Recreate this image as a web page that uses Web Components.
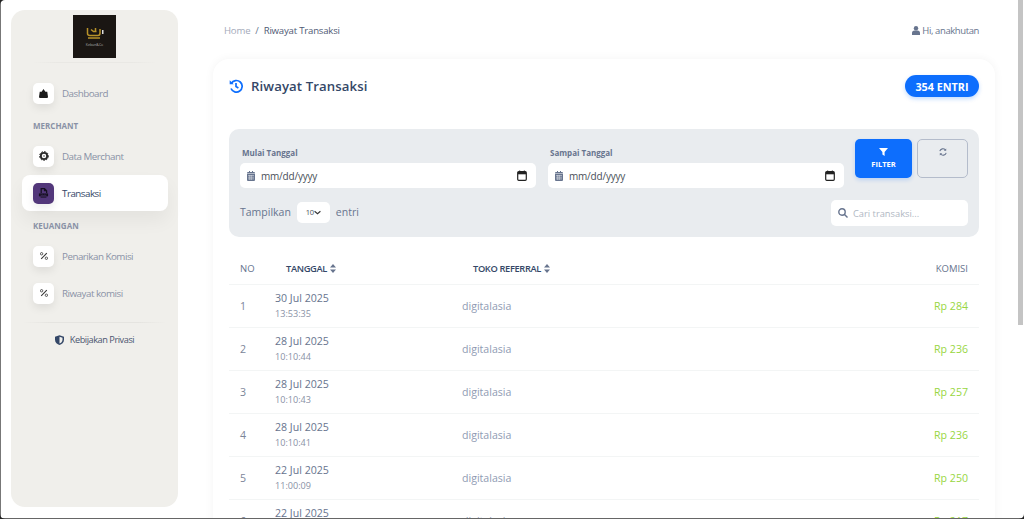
<!DOCTYPE html>
<html><head><meta charset="utf-8">
<style>
html,body{margin:0;padding:0;height:519px;overflow:hidden;background:#fff;font-family:"Open Sans",sans-serif}
</style></head><body>
<template id="t-nav"><style>
:host{display:flex;align-items:center;height:36px;margin:0 10px 0 11px;border-radius:8px;padding-left:11px;gap:8px;font-size:9.8px;letter-spacing:-.5px;color:#8a92a6}
:host([active]){background:#fff;color:#344767;font-weight:500;box-shadow:0 10px 18px rgba(0,0,0,.05);margin-top:1px}
.i{width:21px;height:21px;border-radius:5px;background:#fff;display:flex;align-items:center;justify-content:center;box-shadow:0 4px 8px rgba(0,0,0,.08);color:#222}
:host([active]) .i{background:#52377a;color:#15101f}
svg{display:block}
</style><span class="i"><slot name="icon"></slot></span><slot></slot></template>

<template id="t-side"><style>
:host{display:block;flex:none;width:167px;height:497px;margin:10px 0 0 11px;background:#f0efeb;border-radius:14px;box-sizing:border-box;padding-top:5px}
.logo{width:43px;height:43px;margin:0 auto;background:#1a1613;display:flex;flex-direction:column;align-items:center;justify-content:center}
.hr{height:1px;margin:4px 21px 0;background:linear-gradient(90deg,transparent,#e9e8e4 20%,#e9e8e4 80%,transparent)}
.sec{font-size:8px;font-weight:700;color:#8a92a6;padding-left:22px;line-height:12px}
.hr2{height:1px;margin:11px 11px 0;background:linear-gradient(90deg,transparent,#e5e4e0 20%,#e5e4e0 80%,transparent)}
.pv{display:flex;justify-content:center;align-items:center;gap:6px;font-size:9.2px;letter-spacing:-.45px;color:#4b5570;margin-top:10px}
nav{display:block;padding-top:12px}
</style>
<div class="logo"><svg width="18" height="13" viewBox="0 0 18 13"><path d="M1.500 1v5.500c0 1.500 1 2 2.500 2h8c1.500 0 2-1 2-2.500V2M5 2.500l2.500 2h3M9.500 1v3M2 11h12" fill="none" stroke="#b8922a" stroke-width="1.500"/><path d="M16 3h1.500v4H16z" fill="#ddd"/></svg><span style="font-size:3.500px;color:#aaa;line-height:5px;margin-top:2px">Kebun&amp;Co</span></div>
<div class="hr"></div>
<nav>
<x-nav><svg slot="icon" width="9" height="9" viewBox="0 0 12 12" fill="#1b1b1b"><path d="M6 0l2.500 3.500H11l1 7a1.500 1.500 0 0 1-1.500 1.500h-9A1.500 1.500 0 0 1 0 10.500l1-7h2.500z"/></svg>Dashboard</x-nav>
<div class="sec" style="margin:9px 0 6px">MERCHANT</div>
<x-nav><svg slot="icon" width="10" height="10" viewBox="0 0 12 12"><circle cx="6" cy="6" r="3.800" fill="none" stroke="#2a2a2a" stroke-width="2.200"/><circle cx="6" cy="6" r="5.300" fill="none" stroke="#2a2a2a" stroke-width="1.200" stroke-dasharray="2 1.500"/><circle cx="6" cy="6" r="1.200" fill="#999"/></svg>Data Merchant</x-nav>
<x-nav active><svg slot="icon" width="11" height="10" viewBox="0 0 13 12" fill="#15101f"><path d="M3 0h5l3 3v3H9.500V4H7V1.500H4.500V6H3z"/><path d="M1 6.500h11v3.500H1z"/><path d="M3 7.500h1M5 7.500h1M7 7.500h1M9 7.500h1M3 9h7" stroke="#52377a" stroke-width=".6"/><path d="M3 10.500h7v1H3z"/></svg>Transaksi</x-nav>
<div class="sec" style="margin:9px 0 6px">KEUANGAN</div>
<x-nav><svg slot="icon" width="8" height="8" viewBox="0 0 10 10"><path d="M1.500 8.500l7-7" stroke="#333" stroke-width="1.300"/><circle cx="2" cy="2.200" r="1.500" fill="none" stroke="#333"/><circle cx="8" cy="7.800" r="1.500" fill="none" stroke="#333"/></svg>Penarikan Komisi</x-nav>
<div style="height:1px"></div>
<x-nav><svg slot="icon" width="8" height="8" viewBox="0 0 10 10"><path d="M1.500 8.500l7-7" stroke="#333" stroke-width="1.300"/><circle cx="2" cy="2.200" r="1.500" fill="none" stroke="#333"/><circle cx="8" cy="7.800" r="1.500" fill="none" stroke="#333"/></svg>Riwayat komisi</x-nav>
</nav>
<div class="hr2"></div>
<div class="pv"><svg width="9" height="10" viewBox="0 0 12 13"><path d="M6 0l6 2v4c0 4-3 6-6 7-3-1-6-3-6-7V2z" fill="#344767"/><path d="M6 2l4 1.400v2.600c0 2.700-2 4.200-4 5z" fill="#f0efeb"/></svg>Kebijakan Privasi</div>
</template>

<template id="t-date"><style>
:host{display:block;flex:1}
label{display:block;font-size:8px;font-weight:700;color:#67748e;margin:0 0 4px 2px;line-height:12px}
.b{height:25px;background:#fff;border-radius:5px;display:flex;align-items:center;padding:0 9px 0 7px;gap:6px;font-size:10px;color:#495057;letter-spacing:-.2px}
.s{flex:1}
</style><label><slot name="label"></slot></label><div class="b">
<svg width="8" height="10" viewBox="0 0 8 10" fill="#67748e"><path d="M0 3h8v6a1 1 0 0 1-1 1H1a1 1 0 0 1-1-1zM0 2a1 1 0 0 1 1-1h1V0h1v1h2V0h1v1h1a1 1 0 0 1 1 1v.5H0z"/><path d="M1 4.500h6M1 6.200h6M1 7.900h6M2.700 4v5M4.300 4v5" stroke="#e8ebef" stroke-width=".5"/></svg>
<span class="s">mm/dd/yyyy</span>
<svg width="10" height="11" viewBox="0 0 10 11"><rect x=".7" y="1.700" width="8.600" height="8.600" rx="1" fill="none" stroke="#222" stroke-width="1.200"/><rect x="1" y="2" width="8" height="2.300" fill="#222"/><path d="M2.700 .5v2M7.300 .5v2" stroke="#222"/></svg>
</div></template>

<template id="t-filter"><style>
:host{display:block;background:#e9ecef;border-radius:10px;height:108px;box-sizing:border-box;padding:10px 11px 0}
.r1{display:flex;gap:11px;align-items:flex-start}
.f{flex:1;display:flex;gap:12px;padding-top:8px}
.btns{display:flex;gap:5px;flex:none;width:113px}
.fb{flex:none;width:57px;height:39px;background:#0d6efd;border-radius:5px;color:#fff;display:flex;flex-direction:column;align-items:center;justify-content:center;font-size:7.5px;font-weight:700;gap:3px;box-shadow:0 2px 4px rgba(13,110,253,.2)}
.rb{flex:none;width:49px;border:1px solid #b4bccb;border-radius:5px;display:flex;justify-content:center;padding-top:8px;height:29px}
.r2{display:flex;align-items:center;margin-top:12px;font-size:10.500px;color:#67748e}
.r2>span{position:relative;top:-1px}
.sel{width:33px;height:21px;background:#fff;border-radius:5px;margin:0 6px;display:flex;align-items:center;justify-content:center;font-size:7.500px;color:#495057;letter-spacing:-.3px}
.search{margin-left:auto;width:137px;height:26px;background:#fff;border-radius:5px;display:flex;align-items:center;padding-left:7px;box-sizing:border-box;gap:5px;font-size:9.300px;color:#b0b7c3}
svg{display:block}
</style>
<div class="r1"><div class="f"><x-date><span slot="label">Mulai Tanggal</span></x-date><x-date><span slot="label">Sampai Tanggal</span></x-date></div>
<div class="btns"><div class="fb"><svg width="9" height="8" viewBox="0 0 9 8" fill="#fff"><path d="M0 0h9L5.600 4v4L3.400 6.500V4z"/></svg>FILTER</div>
<div class="rb"><svg width="8" height="8" viewBox="0 0 10 10" fill="none" stroke="#67748e" stroke-width="1.300"><path d="M1 4a4 4 0 0 1 7-1.500M9 6a4 4 0 0 1-7 1.500"/><path d="M9 .5v3H6zM1 9.500v-3h3z" fill="#67748e" stroke="none"/></svg></div></div></div>
<div class="r2"><span>Tampilkan</span><span class="sel">10<svg width="7" height="5" viewBox="0 0 8 6" fill="none" stroke="#333" stroke-width="1.300"><path d="M.5 1.500l3.500 3 3.500-3"/></svg></span><span>entri</span>
<div class="search"><svg width="10" height="10" viewBox="0 0 10 10" fill="none" stroke="#67748e" stroke-width="1.400"><circle cx="4" cy="4" r="3.200"/><path d="M6.500 6.500L9.500 9.500"/></svg>Cari transaksi...</div></div>
</template>

<template id="t-row"><style>
:host{display:grid;grid-template-columns:35px 187px 1fr auto;height:43px;box-sizing:border-box;border-top:1px solid #f3f5f5;align-items:center;padding:0 11px 1px;color:#7b8598;font-size:10.600px}
.d{font-size:10.600px;color:#67748e;line-height:15px}.t{font-size:9.100px;color:#8a92a6;line-height:15px}
.s{color:#8f9bb3}.k{color:#98d642}
</style><span><slot name="n"></slot></span><div><div class="d"><slot name="d"></slot></div><div class="t"><slot name="t"></slot></div></div><span class="s">digitalasia</span><span class="k"><slot name="k"></slot></span></template>

<template id="t-card"><style>
:host{display:block;width:782px;margin-top:19px;height:600px;background:#fff;border-radius:16px;box-shadow:0 0 10px rgba(0,0,0,.05);padding:0 16px;box-sizing:border-box}
.top{padding-top:16px;display:flex;align-items:center;height:22px;margin-bottom:32px}
.tt{font-size:13.200px;font-weight:600;color:#344767;margin-left:8px;flex:1;letter-spacing:.1px}
.badge{width:74px;height:22px;border-radius:11px;background:#0d6efd;color:#fff;font-size:10.800px;font-weight:700;display:flex;align-items:center;justify-content:center;box-shadow:0 2px 4px rgba(13,110,253,.25)}
.th{display:grid;grid-template-columns:46px 187px 1fr auto;height:31px;align-items:center;margin-top:16px;padding:0 11px 1px;box-sizing:border-box;font-size:9.300px;font-weight:600;letter-spacing:-.35px;color:#344767}
.th .no{color:#67748e;font-weight:500;font-size:9.500px;letter-spacing:0}.th .km{color:#67748e;font-weight:500;font-size:9.500px;letter-spacing:0}
.th span{display:flex;align-items:center;gap:3px}
</style>
<div class="top"><svg width="14" height="14" viewBox="0 0 14 14" fill="none" stroke="#0d6efd" stroke-width="1.700"><path d="M2.300 4.500A5.800 5.800 0 1 1 2 9.500"/><path d="M7 4v3.500l2.400 1.400"/><path d="M.7 1.300v4h4z" fill="#0d6efd" stroke="none"/></svg><span class="tt">Riwayat Transaksi</span><span class="badge">354 ENTRI</span></div>
<x-filter></x-filter>
<div class="th"><span class="no">NO</span><span>TANGGAL<svg width="6" height="9" viewBox="0 0 6 9" fill="#67748e"><path d="M3 0l3 3.500H0zM3 9L0 5.500h6z"/></svg></span><span>TOKO REFERRAL<svg width="6" height="9" viewBox="0 0 6 9" fill="#67748e"><path d="M3 0l3 3.500H0zM3 9L0 5.500h6z"/></svg></span><span class="km">KOMISI</span></div>
<slot></slot></template>

<template id="t-top"><style>
:host{display:flex;align-items:center;justify-content:space-between;height:20px;margin-top:20px;width:782px;box-sizing:border-box;padding:0 16px 0 11px;font-size:9.600px;letter-spacing:-.2px}
.a{color:#a4aaba}.c{color:#4f5a75}.sep{color:#67748e;margin:0 5px}
.u{display:flex;align-items:center;gap:2px;color:#67748e;font-size:9.500px;letter-spacing:-.4px}
</style><div><span class="a">Home</span><span class="sep">/</span><span class="c">Riwayat Transaksi</span></div>
<div class="u"><svg width="8" height="9" viewBox="0 0 8 9" fill="#67748e"><circle cx="4" cy="2.200" r="2.200"/><path d="M0 9V7a2.500 2.500 0 0 1 2.500-2.500h3A2.500 2.500 0 0 1 8 7v2z"/></svg>Hi, anakhutan</div></template>

<template id="t-app"><style>
:host{display:flex;width:1024px;height:519px;overflow:hidden;position:relative;background:#fff}
main{display:block;margin-left:35px;width:782px;flex:none}
.sb{position:absolute;right:1px;top:0;height:325px;width:5px;background:#c4c4c4}
.l{position:absolute;left:0;top:0;bottom:0;width:1px;background:#777}
.bt{position:absolute;left:0;right:0;bottom:0;height:1px;background:#666}
.cn{position:absolute;width:5px;height:5px}
</style><x-side></x-side><main><x-top></x-top><x-card><slot></slot></x-card></main>
<div class="sb"></div><div class="l"></div><div class="bt"></div>
<svg class="cn" style="left:0;top:0" viewBox="0 0 5 5"><path d="M0 0h5a5 5 0 0 0-5 5z" fill="#222"/></svg>
<svg class="cn" style="left:0;bottom:0" viewBox="0 0 5 5"><path d="M0 5h5a5 5 0 0 1-5-5z" fill="#222"/></svg>
<svg class="cn" style="right:0;bottom:0" viewBox="0 0 5 5"><path d="M5 5H0a5 5 0 0 0 5-5z" fill="#222"/></svg>
</template>

<x-app>
<x-row><span slot="n">1</span><span slot="d">30 Jul 2025</span><span slot="t">13:53:35</span><span slot="k">Rp 284</span></x-row>
<x-row><span slot="n">2</span><span slot="d">28 Jul 2025</span><span slot="t">10:10:44</span><span slot="k">Rp 236</span></x-row>
<x-row><span slot="n">3</span><span slot="d">28 Jul 2025</span><span slot="t">10:10:43</span><span slot="k">Rp 257</span></x-row>
<x-row><span slot="n">4</span><span slot="d">28 Jul 2025</span><span slot="t">10:10:41</span><span slot="k">Rp 236</span></x-row>
<x-row><span slot="n">5</span><span slot="d">22 Jul 2025</span><span slot="t">11:00:09</span><span slot="k">Rp 250</span></x-row>
<x-row><span slot="n">6</span><span slot="d">22 Jul 2025</span><span slot="t">11:00:07</span><span slot="k">Rp 217</span></x-row>
</x-app>
<script>
const reg=(n,t)=>customElements.define(n,class extends HTMLElement{constructor(){super();this.attachShadow({mode:'open'}).appendChild(document.getElementById(t).content.cloneNode(true));}});
[['x-nav','t-nav'],['x-side','t-side'],['x-date','t-date'],['x-filter','t-filter'],['x-row','t-row'],['x-card','t-card'],['x-top','t-top'],['x-app','t-app']].forEach(a=>reg(...a));
</script>
</body></html>
